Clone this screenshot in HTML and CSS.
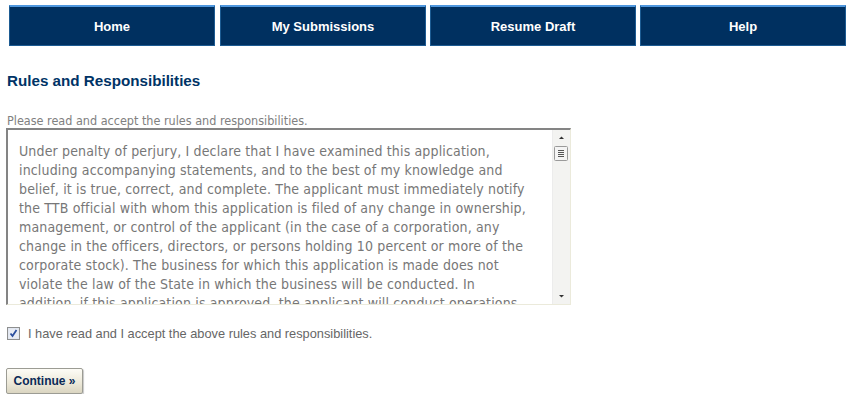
FILE: index.html
```html
<!DOCTYPE html>
<html>
<head>
<meta charset="utf-8">
<title>Rules and Responsibilities</title>
<link rel="stylesheet" href="styles.css">
</head>
<body>
<nav class="nav">
  <a class="nav-btn" href="#">Home</a>
  <a class="nav-btn" href="#">My Submissions</a>
  <a class="nav-btn" href="#">Resume Draft</a>
  <a class="nav-btn" href="#">Help</a>
</nav>
<main class="content">
  <h1 class="title">Rules and Responsibilities</h1>
  <p class="intro">Please read and accept the rules and responsibilities.</p>
  <div class="rules-box">
    <div class="rules-text">
      <span class="line">Under penalty of perjury, I declare that I have examined this application,</span>
      <span class="line">including accompanying statements, and to the best of my knowledge and</span>
      <span class="line">belief, it is true, correct, and complete. The applicant must immediately notify</span>
      <span class="line">the TTB official with whom this application is filed of any change in ownership,</span>
      <span class="line">management, or control of the applicant (in the case of a corporation, any</span>
      <span class="line">change in the officers, directors, or persons holding 10 percent or more of the</span>
      <span class="line">corporate stock). The business for which this application is made does not</span>
      <span class="line">violate the law of the State in which the business will be conducted. In</span>
      <span class="line">addition, if this application is approved, the applicant will conduct operations</span>
    </div>
    <div class="scrollbar">
      <svg class="arrow" width="17" height="16" viewBox="0 0 17 16"><path d="M6 9h5L8.5 6.5z" fill="#333"/></svg>
      <div class="thumb">
        <svg width="15" height="15" viewBox="0 0 15 15"><rect x="0.5" y="0.5" width="13" height="14" rx="1" fill="#f4f4f4" stroke="#9a9a9a"/><path d="M4 4.5h6M4 6.5h6M4 8.5h6M4 10.5h6" stroke="#555" stroke-width="1"/></svg>
      </div>
      <div class="track"></div>
      <svg class="arrow" width="17" height="16" viewBox="0 0 17 16"><path d="M6 7h5L8.5 9.5z" fill="#333"/></svg>
    </div>
  </div>
  <label class="accept">
    <span class="check"><svg width="13" height="13" viewBox="0 0 13 13"><rect x="0.5" y="0.5" width="12" height="12" fill="#dde3ee" stroke="#8e8f8f"/><rect x="1.5" y="1.5" width="10" height="10" fill="#e8ecf4"/><path d="M3.5 6.5l2 2.5 4-6" fill="none" stroke="#2b4f9e" stroke-width="1.8"/></svg></span>
    <span>I have read and I accept the above rules and responsibilities.</span>
  </label>
  <button class="continue" type="button">Continue &raquo;</button>
</main>
</body>
</html>
```

FILE: styles.css
```css
html, body {
  margin: 0;
  padding: 0;
  background: #ffffff;
}

body {
  font-family: "Liberation Sans", Arial, sans-serif;
}

.nav {
  display: flex;
  gap: 4px;
  padding: 5px 0 0 9px;
}

.nav-btn {
  box-sizing: border-box;
  width: 206px;
  height: 41px;
  display: flex;
  align-items: center;
  justify-content: center;
  background: #003060;
  border: 1px solid #1d5b92;
  border-top: 2px solid #4f97de;
  color: #ffffff;
  font-weight: bold;
  font-size: 13px;
  text-decoration: none;
}

.nav-btn:first-child {
  margin-right: 1px;
}

.content {
  padding: 0 0 0 6px;
}

.title {
  margin: 27px 0 0 1px;
  font-size: 15.2px;
  line-height: 16px;
  color: #003366;
  font-weight: bold;
}

.intro {
  margin: 24px 0 0 1px;
  font-family: "DejaVu Sans", sans-serif;
  font-stretch: semi-condensed;
  font-size: 12.5px;
  line-height: 15px;
  color: #808080;
}

.rules-box {
  box-sizing: border-box;
  width: 565px;
  height: 177px;
  margin-top: 0;
  display: flex;
  border-top: 2px solid #848484;
  border-left: 2px solid #848484;
  border-right: 1px solid #ebeadb;
  border-bottom: 1px solid #ebeadb;
  background: #ffffff;
  overflow: hidden;
}

.rules-text {
  flex: 1;
  padding: 12px 0 0 11px;
  font-family: "DejaVu Sans", sans-serif;
  font-stretch: semi-condensed;
  font-size: 14px;
  line-height: 19px;
  color: #777777;
  overflow: hidden;
  letter-spacing: 0.15px;
}

.line {
  display: block;
  white-space: nowrap;
}

.scrollbar {
  width: 17px;
  display: flex;
  flex-direction: column;
  background: #f3f3f1;
  border-left: 1px solid #ececec;
}

.arrow {
  display: block;
  flex: none;
}

.thumb {
  height: 16px;
  padding-left: 1px;
}

.thumb svg {
  display: block;
}

.track {
  flex: 1;
}

.accept {
  display: flex;
  align-items: center;
  gap: 8px;
  margin: 21px 0 0 1px;
  font-size: 12.8px;
  color: #666666;
  height: 14px;
}

.check {
  display: block;
  width: 13px;
  height: 13px;
}

.check svg {
  display: block;
}

.continue {
  display: block;
  margin-top: 28px;
  box-sizing: border-box;
  width: 77px;
  height: 26px;
  padding: 0;
  border: 1px solid #9c9c94;
  border-radius: 2px;
  background: linear-gradient(#fdfcf6, #ece8d8 60%, #dad5c1);
  color: #0a2a57;
  font-family: "Liberation Sans", Arial, sans-serif;
  font-weight: bold;
  font-size: 12px;
  box-shadow: 1px 1px 1px #c8c8c8;
}
```
